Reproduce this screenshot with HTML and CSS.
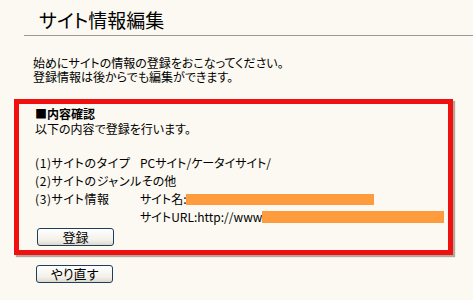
FILE: index.html
```html
<!DOCTYPE html>
<html lang="ja">
<head>
<meta charset="utf-8">
<title>サイト情報編集</title>
<link rel="stylesheet" href="styles.css">
</head>
<body>
<div class="page">
  <h1 class="title">サイト情報編集</h1>
  <p class="intro">始めにサイトの情報の登録をおこなってください。<br>登録情報は後からでも編集ができます。</p>
  <div class="box">
    <p class="lead"><b class="head">■内容確認</b><br>以下の内容で登録を行います。</p>
    <div class="rows">
      <div class="row"><span class="label">(1)サイトのタイプ</span><span class="val">PCサイト/ケータイサイト/</span></div>
      <div class="row"><span class="label">(2)サイトのジャンル</span><span class="val">その他</span></div>
      <div class="row"><span class="label">(3)サイト情報</span><span class="val">サイト名:<span class="redact redact-name"></span></span></div>
      <div class="row"><span class="label"></span><span class="val">サイトURL:http://www<span class="redact redact-url"></span></span></div>
    </div>
    <button class="btn" type="button">登録</button>
  </div>
  <button class="btn btn-retry" type="button">やり直す</button>
</div>
</body>
</html>
```
FILE: styles.css
```css
html, body {
  margin: 0;
  padding: 0;
  background: #fbf9f1;
}
body {
  font-family: "Noto Sans CJK JP", "Noto Sans", sans-serif;
  font-size: 12px;
  color: #000;
  font-feature-settings: "palt";
}
.page {
  padding-top: 8px;
}
.title {
  margin: 0 0 0 24px;
  padding: 0 0 4px 15px;
  font-size: 19px;
  line-height: 23px;
  font-weight: normal;
  border-bottom: 1px solid #999;
}
.intro {
  margin: 20px 0 0 33px;
  line-height: 14px;
}
.box {
  margin: 15px 0 0 14px;
  width: 413px;
  border: 5px solid #f01010;
  box-shadow: 2px 2px 1px #b0a8a0;
  padding: 2px 0 4px 16px;
}
.lead {
  margin: 0;
  line-height: 15px;
}
.head {
  font-weight: bold;
}
.rows {
  margin-top: 18px;
  display: flex;
  flex-direction: column;
}
.row {
  display: flex;
  height: 18px;
  line-height: 18px;
}
.label {
  min-width: 105px;
  flex: none;
  white-space: nowrap;
  letter-spacing: 0.6px;
}
.val {
  display: flex;
  align-items: center;
  white-space: nowrap;
}
.redact {
  display: inline-block;
  background: #fd9b3d;
  height: 11px;
}
.redact-name {
  width: 188px;
}
.redact-url {
  width: 182px;
  height: 12px;
}
.btn {
  display: block;
  margin: 2px 0 0 2px;
  width: 77px;
  height: 18px;
  padding: 0;
  border: 1px solid #1f3d5c;
  border-radius: 3px;
  background: linear-gradient(#ffffff, #f2f0e8 70%, #dcd8cc);
  font-family: "Noto Sans CJK JP", sans-serif;
  font-size: 13px;
  line-height: 16px;
  color: #000;
  font-feature-settings: "palt";
}
.btn-retry {
  margin: 10px 0 0 36px;
}
```
